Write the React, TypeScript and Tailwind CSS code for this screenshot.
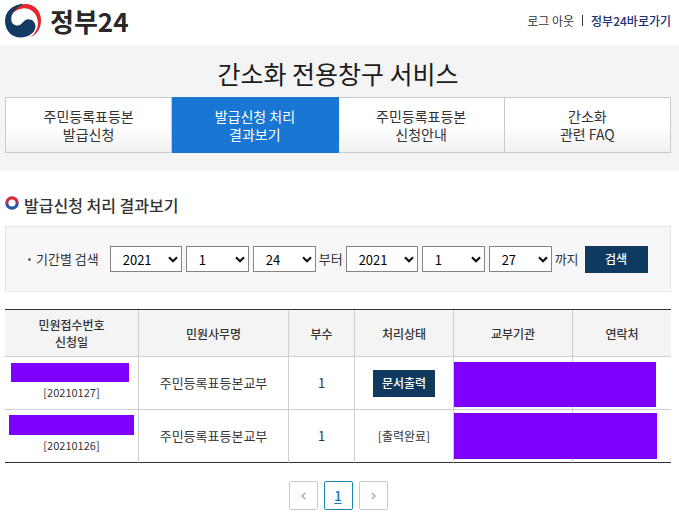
import type { ReactNode } from "react";

const tabs = [
  { first: "주민등록표등본", second: "발급신청", active: false },
  { first: "발급신청 처리", second: "결과보기", active: true },
  { first: "주민등록표등본", second: "신청안내", active: false },
  { first: "간소화", second: "관련 FAQ", active: false },
];

const years = ["2019", "2020", "2021"];
const months = Array.from({ length: 12 }, (_, i) => String(i + 1));
const days = Array.from({ length: 31 }, (_, i) => String(i + 1));

function DateSelect({ label, value, options, wide = false }: { label: string; value: string; options: string[]; wide?: boolean }) {
  return (
    <div className={`relative shrink-0 ${wide ? "w-[72px]" : "w-[63px]"}`}>
      <select
        aria-label={label}
        defaultValue={value}
        className="block h-[26px] w-full appearance-none border border-[#858585] bg-white pt-[2px] pl-3 text-[13px] leading-5 text-black"
      >
        {options.map((option) => (
          <option key={option}>{option}</option>
        ))}
      </select>
      <svg viewBox="0 0 10 7" className="pointer-events-none absolute top-[10px] right-1 h-[7px] w-[10px]" fill="none" stroke="#111" strokeWidth="2.2" aria-hidden="true">
        <path d="M1 1.2 5 5.2 9 1.2" />
      </svg>
    </div>
  );
}

function GovLogo() {
  return (
    <svg viewBox="0 0 36 34" className="h-[34px] w-9" aria-hidden="true">
      <path d="M6.500 11C9 4 14 0 20.500 0C29.500 0 36 7 36 16.500C36 24.500 32 30.500 25.500 33.300C31.500 28 34 22 32.500 15.500C30.500 7.500 24 3.500 17.500 4.500C12.500 5 9 7.500 6.500 11Z" fill="#e5242d" />
      <path d="M14 .5C5.500 2.500 0 9 0 17C0 27 7 33.500 15.500 33.500C24 33.500 30.500 28 30.500 22.500C30.500 18 27 15.200 23.500 15.200C18 15.200 17.500 21.500 12.500 21.500C9 21.500 6.300 19 6.300 15.500C6.300 9 9.500 4.500 18.500 0C17 0 15.500 0 14 .5Z" fill="#113b63" />
    </svg>
  );
}

function Th({ children, last = false }: { children: ReactNode; last?: boolean }) {
  return (
    <th scope="col" className={`h-[47px] border-b border-[#cfcfcf] bg-[#f4f4f4] p-0 text-xs leading-[17px] font-medium ${last ? "" : "border-r"}`}>
      {children}
    </th>
  );
}

const cell = "relative h-[53px] border-r border-b border-r-[#cfcfcf] px-0 text-[13px]";

export default function App() {
  return (
    <div className="bg-white font-['Noto_Sans_CJK_KR',sans-serif] text-[#333]">
      <header className="flex h-[45px] items-center justify-between pr-2 pl-[5px]">
        <a href="#home" className="flex items-center gap-[9px] pb-1">
          <GovLogo />
          <span className="text-[26px] leading-9 font-bold text-[#2b2627]">정부24</span>
        </a>
        <nav className="flex items-center pb-1 text-xs leading-5">
          <a href="#logout">로그 아웃</a>
          <span className="mx-2 h-[11px] w-px bg-[#333]" />
          <a href="#gov" className="font-medium text-[#1e3174]">정부24바로가기</a>
        </nav>
      </header>

      <section className="bg-[#f4f4f4] pt-2 pr-2 pb-[18px] pl-[5px]">
        <h1 className="pb-1 text-center text-[25px] leading-10 text-[#1c1c1c]">간소화 전용창구 서비스</h1>
        <nav className="grid grid-cols-4 border-l border-[#cacaca]">
          {tabs.map((tab, i) => (
            <a
              key={i}
              href={`#tab${i}`}
              aria-current={tab.active ? "page" : undefined}
              className={`flex h-14 items-center justify-center border-y border-r text-center text-sm leading-[18px] ${
                tab.active ? "border-[#1976d2] bg-[#1976d2] text-white" : "border-[#cacaca] bg-linear-to-b from-white from-50% to-[#f1f1f1]"
              }`}
            >
              <span>{tab.first}<br />{tab.second}</span>
            </a>
          ))}
        </nav>
      </section>

      <main className="pt-[22px] pr-2 pl-[5px]">
        <h2 className="flex items-center gap-[5px] text-base leading-6 font-medium">
          <svg viewBox="0 0 14 14" className="mb-1 size-[14px]" aria-hidden="true">
            <defs>
              <linearGradient id="ring" x1="0" y1="0" x2="0" y2="1">
                <stop offset="0.25" stopColor="#d42b3c" />
                <stop offset="0.75" stopColor="#2459a8" />
              </linearGradient>
            </defs>
            <circle cx="7" cy="7" r="5.200" fill="none" stroke="url(#ring)" strokeWidth="3.200" />
          </svg>
          발급신청 처리 결과보기
        </h2>

        <form className="mt-[9px] flex h-[66px] items-center border border-[#e4e5ea] bg-[#f7f7fa] pl-[22px] text-[13px]" onSubmit={(e) => e.preventDefault()}>
          <span className="mr-[5px] size-[3px] shrink-0 rounded-full bg-[#666]" />
          <span className="mr-[11px] shrink-0">기간별 검색</span>
          <div className="flex gap-1">
            <DateSelect label="시작 연도" value="2021" options={years} wide />
            <DateSelect label="시작 월" value="1" options={months} />
            <DateSelect label="시작 일" value="24" options={days} />
          </div>
          <span className="mx-[3px] shrink-0">부터</span>
          <div className="flex gap-1">
            <DateSelect label="종료 연도" value="2021" options={years} wide />
            <DateSelect label="종료 월" value="1" options={months} />
            <DateSelect label="종료 일" value="27" options={days} />
          </div>
          <span className="mx-[3px] shrink-0">까지</span>
          <button type="submit" className="ml-[3px] h-[27px] w-[63px] shrink-0 bg-[#103960] text-xs font-medium text-white">검색</button>
        </form>

        <table className="mt-[17px] w-full table-fixed border-separate border-spacing-0 border-t border-[#333] text-center">
          <colgroup>
            <col className="w-[134px]" />
            <col className="w-[150px]" />
            <col className="w-[66px]" />
            <col className="w-[99px]" />
            <col className="w-[119px]" />
            <col />
          </colgroup>
          <thead>
            <tr>
              <Th>민원접수번호<br />신청일</Th>
              <Th>민원사무명</Th>
              <Th>부수</Th>
              <Th>처리상태</Th>
              <Th>교부기관</Th>
              <Th last>연락처</Th>
            </tr>
          </thead>
          <tbody>
            <tr>
              <td className={`${cell} border-b-[#cfcfcf] pt-[6px] pb-0 align-top`}>
                <div className="mr-[9px] ml-auto h-[19px] w-[118px] bg-[#7f00ff]" />
                <div className="pt-[2px] text-[11px] leading-4">[20210127]</div>
              </td>
              <td className={`${cell} border-b-[#cfcfcf] py-0`}>주민등록표등본교부</td>
              <td className={`${cell} border-b-[#cfcfcf] py-0`}>1</td>
              <td className={`${cell} border-b-[#cfcfcf] py-0`}>
                <button type="button" className="h-[27px] w-[62px] bg-[#103960] text-xs font-medium text-white">문서출력</button>
              </td>
              <td className={`${cell} border-b-[#cfcfcf] py-0`}>
                <div className="absolute top-[5px] left-0 z-10 h-[45px] w-[202px] bg-[#7f00ff]" />
              </td>
              <td className="border-b border-[#cfcfcf] p-0" />
            </tr>
            <tr>
              <td className={`${cell} border-b-[#333] pt-[5px] pb-0 align-top`}>
                <div className="mr-1 ml-auto h-5 w-[125px] bg-[#7f00ff]" />
                <div className="pt-[2px] text-[11px] leading-4">[20210126]</div>
              </td>
              <td className={`${cell} border-b-[#333] py-0`}>주민등록표등본교부</td>
              <td className={`${cell} border-b-[#333] py-0`}>1</td>
              <td className={`${cell} border-b-[#333] py-0`}><span className="text-xs">[출력완료]</span></td>
              <td className={`${cell} border-b-[#333] py-0`}>
                <div className="absolute top-[3px] left-0 z-10 h-[46px] w-[203px] bg-[#7f00ff]" />
              </td>
              <td className="border-b border-[#333] p-0" />
            </tr>
          </tbody>
        </table>

        <nav aria-label="페이지" className="mt-[18px] flex justify-center gap-[6px] pb-[10px]">
          <button type="button" aria-label="이전" className="flex size-[29px] items-center justify-center rounded-xs border border-[#cacaca]">
            <svg viewBox="0 0 5 8" className="h-2 w-[5px]" fill="none" stroke="#aaa" strokeWidth="1.500"><path d="M4.200 1 1 4 4.200 7" /></svg>
          </button>
          <button type="button" aria-current="page" className="size-[29px] rounded-xs border border-[#1b87ad] text-[13px] font-medium text-[#1976c2] underline underline-offset-2">1</button>
          <button type="button" aria-label="다음" className="flex size-[29px] items-center justify-center rounded-xs border border-[#cacaca]">
            <svg viewBox="0 0 5 8" className="h-2 w-[5px]" fill="none" stroke="#aaa" strokeWidth="1.500"><path d="M.8 1 4 4 .8 7" /></svg>
          </button>
        </nav>
      </main>
    </div>
  );
}
